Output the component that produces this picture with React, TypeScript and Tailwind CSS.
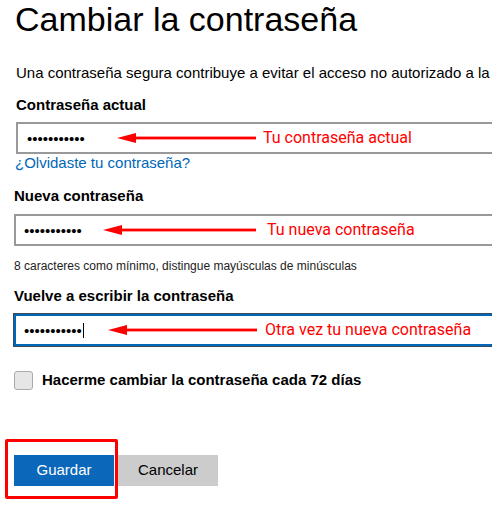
import React from "react";

const Arrow = ({ width }: { width: number }) => (
  <svg width={width} height={12} viewBox={`0 0 ${width} 12`} className="block">
    <polygon points="0,6 19,1 19,11" fill="#ff0000" />
    <rect x={17} y={4.6} width={width - 17} height={2.8} fill="#ff0000" />
  </svg>
);

const Note = ({
  arrowLeft,
  arrowWidth,
  textLeft,
  text,
}: {
  arrowLeft: number;
  arrowWidth: number;
  textLeft: number;
  text: string;
}) => (
  <>
    <div
      className="absolute inset-y-0 flex items-center"
      style={{ left: arrowLeft }}
    >
      <Arrow width={arrowWidth} />
    </div>
    <div
      className="absolute inset-y-0 flex items-center whitespace-nowrap text-[16px] leading-[20px] text-[#ff0000] font-['Roboto',sans-serif]"
      style={{ left: textLeft }}
    >
      {text}
    </div>
  </>
);

const Dots = () => (
  <span className="text-[15px] leading-none text-black">•••••••••••</span>
);

const App = () => {
  return (
    <div className="relative w-[492px] h-[508px] overflow-hidden bg-white font-['Liberation_Sans',Arial,sans-serif] text-black">
      {/* HEADER */}
      <h1 className="mt-[1px] ml-[15px] text-[34px] leading-[36px] font-normal whitespace-nowrap">
        Cambiar la contraseña
      </h1>
      <p className="mt-[26px] ml-[16px] text-[15px] leading-[20px] whitespace-nowrap">
        Una contraseña segura contribuye a evitar el acceso no autorizado a la
      </p>

      {/* CURRENT */}
      <label className="block mt-[12px] ml-[16px] text-[15px] leading-[20px] font-bold">
        Contraseña actual
      </label>
      <div className="relative mt-[7px] ml-[16px] w-[520px] h-[32px] border-2 border-[#999999] flex items-center pl-[9px]">
        <Dots />
        <Note arrowLeft={99} arrowWidth={139} textLeft={245} text="Tu contraseña actual" />
      </div>
      <a className="block ml-[15px] text-[15px] leading-[18px] text-[#0067b8]">
        ¿Olvidaste tu contraseña?
      </a>

      {/* NEW */}
      <label className="block mt-[14px] ml-[14px] text-[15px] leading-[20px] font-bold">
        Nueva contraseña
      </label>
      <div className="relative mt-[8px] ml-[14px] w-[520px] h-[32px] border-2 border-[#999999] flex items-center pl-[8px]">
        <Dots />
        <Note arrowLeft={87} arrowWidth={153} textLeft={251} text="Tu nueva contraseña" />
      </div>
      <p className="mt-[12px] ml-[14px] text-[12px] leading-[16px] text-[#222] whitespace-nowrap">
        8 caracteres como mínimo, distingue mayúsculas de minúsculas
      </p>

      {/* REPEAT */}
      <label className="block mt-[12px] ml-[14px] text-[15px] leading-[20px] font-bold">
        Vuelve a escribir la contraseña
      </label>
      <div className="relative mt-[8px] ml-[14px] w-[520px] h-[32px] border-2 border-[#0067b8] shadow-[0_0_0_1px_#3b4a5a] flex items-center pl-[8px]">
        <Dots />
        <span className="ml-[1px] w-px h-[15px] bg-black" />
        <Note arrowLeft={92} arrowWidth={149} textLeft={249} text="Otra vez tu nueva contraseña" />
      </div>

      {/* CHECKBOX */}
      <div className="mt-[24px] ml-[14px] flex items-center gap-[9px]">
        <span className="w-[19px] h-[19px] rounded-[3px] border border-[#aaaaaa] bg-[#e6e6e6]" />
        <span className="text-[15px] leading-[20px] font-bold whitespace-nowrap">
          Hacerme cambiar la contraseña cada 72 días
        </span>
      </div>

      {/* ACTIONS */}
      <div className="mt-[65px] ml-[14px] flex gap-[4px]">
        <button className="w-[100px] h-[31px] bg-[#0b67ba] text-white text-[15px]">
          Guardar
        </button>
        <button className="w-[100px] h-[31px] bg-[#cccccc] text-black text-[15px]">
          Cancelar
        </button>
      </div>
      <div className="absolute left-[5px] top-[439px] w-[113px] h-[60px] border-[3px] border-[#ff0000] rounded-[2px]" />
    </div>
  );
};

export default App;
